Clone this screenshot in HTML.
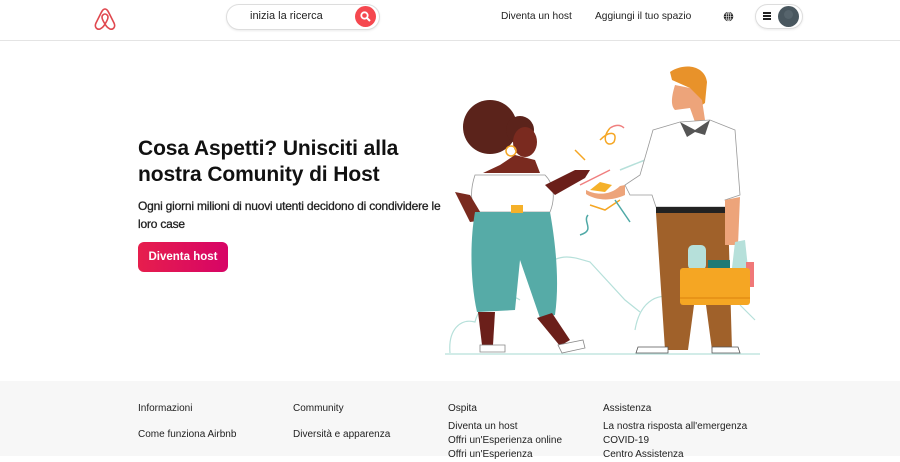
<!DOCTYPE html>
<html><head><meta charset="utf-8"><style>
*{margin:0;padding:0;box-sizing:border-box}
body{width:900px;height:456px;overflow:hidden;background:#fff;font-family:"Liberation Sans",sans-serif;color:#222;position:relative}
.a{position:absolute;white-space:nowrap}
.hdr{position:absolute;left:0;top:0;width:900px;height:41px;border-bottom:1px solid #e4e4e4}
.pill{position:absolute;border:1px solid #ddd;border-radius:16px;box-shadow:0 1px 2px rgba(0,0,0,.08)}
.nav{font-size:10.2px;color:#222}
h1{position:absolute;left:138px;top:136px;font-size:21px;line-height:26px;font-weight:bold;color:#111;width:300px;letter-spacing:-0.1px}
.sub{position:absolute;left:138px;top:197px;font-size:12px;line-height:18px;color:#222;width:310px;letter-spacing:-0.2px;-webkit-text-stroke:0.3px #222}
.btn{position:absolute;left:138px;top:242px;width:90px;height:30px;border-radius:6px;background:linear-gradient(90deg,#e61e4d,#d70466);color:#fff;font-size:11.5px;font-weight:bold;text-align:center;line-height:30px}
.ft{position:absolute;left:0;top:381px;width:900px;height:75px;background:#f7f7f7}
.ft div{position:absolute;font-size:10px;color:#222;line-height:14px;white-space:nowrap}
</style></head><body>
<div class="hdr"></div>
<svg class="a" style="left:92px;top:5px" width="26" height="26" viewBox="0 0 26 26"><path d="M13 4 C11 4 10 6 8 10 L4 18 C2 22 5 25 8 24 C10 23 12 21 13 19 C14 21 16 23 18 24 C21 25 24 22 22 18 L18 10 C16 6 15 4 13 4 Z M13 19 C11 16 10 14 10 12 C10 10 12 9 13 9 C14 9 16 10 16 12 C16 14 15 16 13 19 Z" fill="none" stroke="#e0484f" stroke-width="1.6"/></svg>
<div class="pill" style="left:226px;top:4px;width:154px;height:26px"></div>
<div class="a" style="left:250px;top:10px;font-size:11px">inizia la ricerca</div>
<div class="a" style="left:355px;top:6px;width:21px;height:21px;border-radius:50%;background:#f5484f"></div>
<svg class="a" style="left:359px;top:10px" width="13" height="13"><circle cx="5.5" cy="5.5" r="3.2" fill="none" stroke="#fff" stroke-width="1.8"/><path d="M8 8 L11 11" stroke="#fff" stroke-width="2"/></svg>
<div class="a nav" style="left:501px;top:11px">Diventa un host</div>
<div class="a nav" style="left:595px;top:11px">Aggiungi il tuo spazio</div>
<svg class="a" style="left:723px;top:11px" width="11" height="11"><circle cx="5.5" cy="5.5" r="4.8" fill="#222"/><path d="M0.7 5.5H10.3M5.5 0.7V10.3M1.5 3H9.5M1.5 8H9.5" stroke="#fff" stroke-width="0.6"/><ellipse cx="5.5" cy="5.5" rx="2.2" ry="4.8" fill="none" stroke="#fff" stroke-width="0.6"/></svg>
<div class="pill" style="left:755px;top:4px;width:48px;height:25px"></div>
<div class="a" style="left:763px;top:12px;width:8px;height:2px;background:#222;box-shadow:0 3px #222,0 6px #222"></div>
<div class="a" style="left:778px;top:6px;width:21px;height:21px;border-radius:50%;background:#49575f"></div>
<div class="a" style="left:784px;top:10px;width:9px;height:9px;border-radius:50%;background:#56646c"></div>

<h1>Cosa Aspetti? Unisciti alla nostra Comunity di Host</h1>
<div class="sub">Ogni giorni milioni di nuovi utenti decidono di condividere le loro case</div>
<div class="btn">Diventa host</div>

<svg class="a" style="left:440px;top:60px" width="330" height="300" viewBox="440 60 330 300">
<g fill="none" stroke="#b6e0da" stroke-width="1.2">
<path d="M450 353 C448 330 460 318 475 322 C480 300 505 290 520 300"/>
<path d="M540 270 C560 250 575 258 590 262 L625 300 L640 312"/>
<path d="M635 330 C640 300 660 290 680 300"/>
<path d="M445 354 H760"/>
<path d="M740 305 L755 320"/>
</g>
<circle cx="490" cy="127" r="27" fill="#5b231b"/>
<circle cx="520" cy="130" r="14" fill="#5b231b"/>
<ellipse cx="525" cy="142" rx="12" ry="15" fill="#7a2a1f"/>
<circle cx="511" cy="151" r="5" fill="none" stroke="#f5a623" stroke-width="1.5"/>
<path d="M483 173 L540 173 L535 160 L515 155 L500 165 Z" fill="#7a2a1f"/>
<path d="M475 175 C470 190 470 205 478 212 L550 212 C555 200 555 185 545 175 Z" fill="#fff" stroke="#999" stroke-width="0.8"/>
<path d="M545 185 L575 170 L590 170 L585 178 L555 195 Z" fill="#6b1f1a"/>
<path d="M455 192 L470 195 L485 220 L470 222 Z" fill="#7a2a1f"/>
<path d="M475 212 L550 212 C555 240 560 280 555 315 L540 318 L520 260 L515 310 L477 312 C470 280 470 240 475 212 Z" fill="#56aba7"/>
<rect x="511" y="205" width="12" height="8" fill="#f5b12a"/>
<path d="M478 312 L495 312 L493 345 L482 345 Z" fill="#6b1f1a"/>
<path d="M537 318 L552 313 L570 340 L560 346 Z" fill="#6b1f1a"/>
<path d="M480 345 L505 345 L505 352 L480 352 Z" fill="#fff" stroke="#888" stroke-width="0.8"/>
<path d="M558 345 L583 340 L585 348 L562 353 Z" fill="#fff" stroke="#888" stroke-width="0.8"/>
<path d="M590 190 L600 182 L612 185 L605 192 Z" fill="#f5b12a"/>
<path d="M586 190 C595 195 610 196 620 186 L625 185 L625 195 C610 202 595 200 586 194 Z" fill="#eda47a"/>
<g fill="none" stroke-width="1.5">
<path d="M600 140 C610 130 618 132 614 142 C608 148 600 140 610 128" stroke="#f5a623"/>
<path d="M610 128 C615 125 620 124 624 128" stroke="#f08080"/>
<path d="M575 150 L585 160" stroke="#f5a623"/>
<path d="M580 185 L610 170" stroke="#f08080"/>
<path d="M620 170 L645 160" stroke="#b6e0da"/>
<path d="M590 205 L605 210 L620 200" stroke="#f5a623"/>
<path d="M615 200 L630 222" stroke="#4fa9a6"/>
<path d="M588 215 C582 222 596 230 580 235" stroke="#4fa9a6"/>
</g>
<path d="M670 72 C685 62 705 66 707 82 L705 103 L695 110 L690 88 L672 80 Z" fill="#e8922a"/>
<path d="M675 85 C672 95 670 105 675 110 L690 108 L695 122 L705 120 L702 100 L690 88 Z" fill="#eda47a"/>
<path d="M653 130 L680 122 L710 120 L735 130 L740 195 L725 200 L728 207 L656 207 L652 195 L630 195 L625 185 L640 175 Z" fill="#fff" stroke="#999" stroke-width="0.8"/>
<path d="M680 122 L695 130 L710 120 L705 135 L695 132 L687 137 Z" fill="#555"/>
<rect x="656" y="207" width="72" height="6" fill="#222"/>
<path d="M656 213 L728 213 L732 350 L712 350 L700 260 L688 350 L665 350 Z" fill="#a0612a"/>
<path d="M638 347 L668 347 L668 353 L636 353 Z" fill="#fff" stroke="#555" stroke-width="0.8"/>
<path d="M712 347 L738 347 L740 353 L712 353 Z" fill="#fff" stroke="#555" stroke-width="0.8"/>
<path d="M725 200 L740 197 L738 245 L725 245 Z" fill="#eda47a"/>
<rect x="688" y="245" width="18" height="25" rx="5" fill="#b6e0da"/>
<path d="M735 242 L745 240 L748 268 L732 268 Z" fill="#b6e0da"/>
<rect x="708" y="260" width="22" height="10" fill="#1e7a75"/>
<rect x="746" y="262" width="8" height="25" fill="#f07878"/>
<rect x="680" y="268" width="70" height="37" rx="3" fill="#f5a623"/>
<path d="M680 298 H750" stroke="#e08a12" stroke-width="1.2"/>
</svg>

<div class="ft">
<div style="left:138px;top:21px">Informazioni</div>
<div style="left:293px;top:21px">Community</div>
<div style="left:448px;top:21px">Ospita</div>
<div style="left:603px;top:21px">Assistenza</div>
<div style="left:138px;top:47px">Come funziona Airbnb</div>
<div style="left:293px;top:47px">Diversità e apparenza</div>
<div style="left:448px;top:39px">Diventa un host<br>Offri un'Esperienza online<br>Offri un'Esperienza</div>
<div style="left:603px;top:39px">La nostra risposta all'emergenza<br>COVID-19<br>Centro Assistenza</div>
</div>
</body></html>
